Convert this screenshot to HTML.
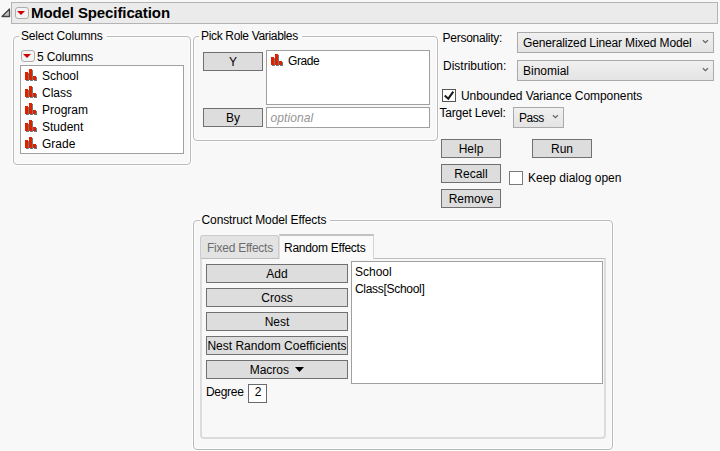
<!DOCTYPE html>
<html><head><meta charset="utf-8">
<style>
*{box-sizing:border-box;margin:0;padding:0}
html,body{width:720px;height:451px;overflow:hidden;background:#f8f8f8;font-family:"Liberation Sans",sans-serif;font-size:12px;color:#000}
.a{position:absolute}
.t{position:absolute;white-space:nowrap;line-height:14px}
.grp{position:absolute;border:1px solid #b9b9b9;border-radius:4px;box-shadow:0 0 0 1px #fff, inset 0 0 0 1px #fff}
.gl{position:absolute;background:#f8f8f8;padding:0 4px 0 2px;white-space:nowrap;line-height:14px}
.btn{position:absolute;background:#dddddd;border:1px solid #717171;text-align:center;line-height:17px;padding-top:1px;white-space:nowrap}
.box{position:absolute;background:#fff;border:1px solid #a0a0a0}
.rb{position:absolute;width:14px;height:12px;border:1px solid #adadad;border-radius:3px;background:#f3f3f3}
.rb:after{content:"";position:absolute;left:1px;top:2.5px;border-left:4px solid transparent;border-right:4px solid transparent;border-top:4.5px solid #cc0000}
.dd{position:absolute;background:linear-gradient(#f0f0f0,#e4e4e4);border:1px solid #aaaaaa;line-height:18px;padding-left:5px;padding-top:1px;white-space:nowrap}
.chev{position:absolute;right:4px;top:6px}
.ic{position:absolute}
.chk{position:absolute;background:#fff;border:1px solid #333;width:14px;height:14px}
</style></head><body>

<!-- header -->
<svg class="a" style="left:0px;top:7px" width="12" height="12" viewBox="0 0 12 12"><path d="M2 9.5 L9.5 2 L9.5 9.5 Z" fill="#c4c4c4" stroke="#444" stroke-width="1.3" stroke-linejoin="round"/></svg>
<div class="a" style="left:11px;top:2px;width:707px;height:22px;background:#ebebeb;border:1px solid #b4b4b4"></div>
<div class="rb" style="left:15px;top:7px;width:14px;height:12px"></div>
<div class="t" style="left:31px;top:4px;font-weight:bold;font-size:15px;line-height:17px;letter-spacing:-0.1px">Model Specification</div>

<!-- Select Columns -->
<div class="grp" style="left:13px;top:36px;width:178px;height:129px"></div>
<div class="gl" style="left:19px;top:29px;letter-spacing:-0.17px">Select Columns</div>
<div class="rb" style="left:21px;top:50px"></div>
<div class="t" style="left:37px;top:50px;letter-spacing:-0.15px">5 Columns</div>
<div class="box" style="left:20px;top:65px;width:164px;height:89px"></div>
<svg width="0" height="0" style="position:absolute"><defs><g id="bar"><rect x="1" y="4" width="3" height="8" fill="#707a82"/><rect x="5" y="1" width="3" height="11" fill="#707a82"/><rect x="9" y="8" width="3" height="4" fill="#707a82"/><rect x="0" y="3" width="3" height="8" fill="#dd2200"/><rect x="4" y="0" width="3" height="11" fill="#dd2200"/><rect x="8" y="7" width="3" height="4" fill="#dd2200"/></g></defs></svg>
<svg class="ic" style="left:25px;top:69px" width="13" height="13"><use href="#bar"/></svg>
<div class="t" style="left:42px;top:69px">School</div>
<svg class="ic" style="left:25px;top:86px" width="13" height="13"><use href="#bar"/></svg>
<div class="t" style="left:42px;top:86px">Class</div>
<svg class="ic" style="left:25px;top:103px" width="13" height="13"><use href="#bar"/></svg>
<div class="t" style="left:42px;top:103px">Program</div>
<svg class="ic" style="left:25px;top:120px" width="13" height="13"><use href="#bar"/></svg>
<div class="t" style="left:42px;top:120px">Student</div>
<svg class="ic" style="left:25px;top:137px" width="13" height="13"><use href="#bar"/></svg>
<div class="t" style="left:42px;top:137px">Grade</div>

<!-- Pick Role Variables -->
<div class="grp" style="left:193px;top:36px;width:245px;height:105px"></div>
<div class="gl" style="left:199px;top:29px;letter-spacing:-0.33px">Pick Role Variables</div>
<div class="btn" style="left:203px;top:52px;width:60px;height:19px">Y</div>
<div class="box" style="left:266px;top:50px;width:164px;height:55px"></div>
<svg class="ic" style="left:271px;top:54px" width="13" height="13"><use href="#bar"/></svg>
<div class="t" style="left:288px;top:54px;letter-spacing:-0.4px">Grade</div>
<div class="btn" style="left:203px;top:108px;width:60px;height:19px">By</div>
<div class="box" style="left:266px;top:107px;width:164px;height:21px"></div>
<div class="t" style="left:270.5px;top:111px;color:#959595;font-style:italic;letter-spacing:0.1px">optional</div>

<!-- right options -->
<div class="t" style="left:442.5px;top:31px;letter-spacing:-0.25px">Personality:</div>
<div class="dd" style="left:517px;top:32px;width:197px;height:21px"><span style="letter-spacing:-0.14px">Generalized Linear Mixed Model</span><svg class="chev" width="7" height="5"><path d="M0.9 1.2 L3.4 3.7 L5.9 1.2" fill="none" stroke="#666" stroke-width="1.25"/></svg></div>
<div class="t" style="left:443px;top:59px">Distribution:</div>
<div class="dd" style="left:517px;top:60px;width:197px;height:21px">Binomial<svg class="chev" width="7" height="5"><path d="M0.9 1.2 L3.4 3.7 L5.9 1.2" fill="none" stroke="#666" stroke-width="1.25"/></svg></div>
<div class="chk" style="left:442px;top:89px;width:14px;height:13px;border-color:#555"><svg style="position:absolute;left:0px;top:0px" width="12" height="11"><path d="M1.7 5.5 L5.3 8.7 L10.3 1.7" fill="none" stroke="#1a1a1a" stroke-width="2"/></svg></div>
<div class="t" style="left:461px;top:89px;letter-spacing:-0.07px">Unbounded Variance Components</div>
<div class="t" style="left:439.5px;top:106px;letter-spacing:-0.2px">Target Level:</div>
<div class="dd" style="left:513px;top:107px;width:51px;height:21px"><span style="letter-spacing:-0.5px">Pass</span><svg class="chev" width="7" height="5"><path d="M0.9 1.2 L3.4 3.7 L5.9 1.2" fill="none" stroke="#666" stroke-width="1.25"/></svg></div>

<div class="btn" style="left:441px;top:139px;width:60px;height:19px">Help</div>
<div class="btn" style="left:532px;top:139px;width:60px;height:19px">Run</div>
<div class="btn" style="left:441px;top:164px;width:60px;height:19px">Recall</div>
<div class="chk" style="left:509px;top:171px;width:14px;height:14px;border-color:#7a7a7a"></div>
<div class="t" style="left:528px;top:171px">Keep dialog open</div>
<div class="btn" style="left:441px;top:189px;width:60px;height:19px">Remove</div>

<!-- Construct Model Effects -->
<div class="grp" style="left:193px;top:220px;width:420px;height:230px"></div>
<div class="gl" style="left:199.5px;top:213px;letter-spacing:-0.1px">Construct Model Effects</div>
<!-- tabs -->
<div class="a" style="left:200px;top:235px;width:79px;height:24px;background:#e3e3e3;border:1px solid #cccccc;border-bottom:none;border-radius:3px 3px 0 0"></div>
<div class="t" style="left:207px;top:241px;color:#6d6d6d;letter-spacing:-0.25px">Fixed Effects</div>
<div class="a" style="left:200px;top:258px;width:406px;height:181px;border:2px solid #dcdcdc;border-top:1px solid #bdbdbd;border-radius:0 0 4px 4px"></div>
<div class="a" style="left:279px;top:234px;width:95px;height:25px;background:#fafafa;border-top:2px solid #c2c2c2;border-right:1px solid #d4d4d4;border-left:1px solid #e0e0e0"></div>
<div class="t" style="left:284px;top:241px;letter-spacing:-0.27px">Random Effects</div>

<div class="btn" style="left:206px;top:264px;width:142px;height:19px">Add</div>
<div class="btn" style="left:206px;top:288px;width:142px;height:19px">Cross</div>
<div class="btn" style="left:206px;top:312px;width:142px;height:19px">Nest</div>
<div class="btn" style="left:206px;top:336px;width:142px;height:19px">Nest Random Coefficients</div>
<div class="btn" style="left:206px;top:360px;width:142px;height:19px">Macros <svg width="9" height="6" style="vertical-align:1px;margin-left:3px"><path d="M0 0 L9 0 L4.5 5 Z" fill="#000"/></svg></div>
<div class="box" style="left:351px;top:261px;width:252px;height:123px"></div>
<div class="t" style="left:355px;top:265px">School</div>
<div class="t" style="left:355px;top:282px;letter-spacing:-0.3px">Class[School]</div>
<div class="t" style="left:206px;top:385px;letter-spacing:-0.3px">Degree</div>
<div class="box" style="left:248px;top:384px;width:19px;height:19px;border-color:#6a6a6a;text-align:center;line-height:15px;padding-left:1px">2</div>

</body></html>
